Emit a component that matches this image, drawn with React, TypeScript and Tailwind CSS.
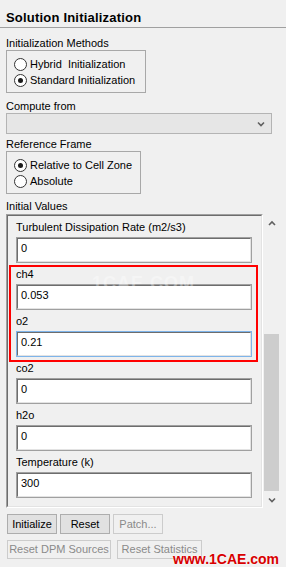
import type { ReactNode } from "react"

// classic windows-style radio
function Radio({ checked, label }: { checked?: boolean; label: string }) {
    return (
        <div className="flex items-center h-[16px] leading-[16px]">
            <span className="w-[13px] h-[13px] rounded-full border border-[#333333] bg-white flex items-center justify-center">
                {checked && <span className="w-[5px] h-[5px] rounded-full bg-[#1a1a1a]" />}
            </span>
            <span className="ml-[3px] whitespace-pre">{label}</span>
        </div>
    )
}

function GroupLabel({ children, mt }: { children: ReactNode; mt: string }) {
    return <div className={`${mt} px-[6px] leading-[13px] h-[13px]`}>{children}</div>
}

function Field({ label, value, focused }: { label: string; value: string; focused?: boolean }) {
    return (
        <div className="h-[47px] pl-[8px]">
            <div className="h-[21px] pt-[5px] leading-[13px]">{label}</div>
            <div
                className={`w-[236px] h-[26px] border ${focused ? "border-[#7eb4ea]" : "border-[#a0a0a0]"}`}
            >
                <div className="h-full bg-white border-t border-l border-[#6d6d6d] border-r-[#e3e3e3] border-b-[#e3e3e3] border-r border-b pl-[3px] pt-[1px] leading-[16px]">
                    {value}
                </div>
            </div>
        </div>
    )
}

function Btn({ children, w, disabled, h }: { children: ReactNode; w: string; disabled?: boolean; h: string }) {
    return (
        <div
            className={`${w} ${h} flex items-center justify-center border ${
                disabled
                    ? "border-[#cccccc] bg-[#f0f0f0] text-[#8a8a8a]"
                    : "border-[#adadad] bg-[#e1e1e1] text-black"
            }`}
        >
            {children}
        </div>
    )
}

function Chevron({ up, className }: { up?: boolean; className?: string }) {
    return (
        <svg width="8" height="6" viewBox="0 0 8 6" className={className}>
            <polyline
                points={up ? "1,5 4,2 7,5" : "1,1.5 4,4.5 7,1.5"}
                fill="none"
                stroke="#606060"
                strokeWidth="1.6"
            />
        </svg>
    )
}

export default function App() {
    return (
        <div
            className="relative w-[286px] h-[567px] overflow-hidden bg-[#f0f0f0] text-black text-[11px]"
            style={{ fontFamily: '"Liberation Sans", Arial, sans-serif' }}
        >
            {/* Title */}
            <div className="h-[28px] border-b border-[#a0a0a0] pt-[10px] px-[6px]">
                <div className="text-[13px] font-bold leading-[16px] tracking-[0.2px]">Solution Initialization</div>
            </div>

            {/* Initialization Methods */}
            <GroupLabel mt="mt-[9px]">Initialization Methods</GroupLabel>
            <div className="ml-[6px] w-[140px] h-[43px] border border-[#a8a8a8] pt-[5px] pl-[7px]">
                <Radio label="Hybrid  Initialization" />
                <Radio checked label="Standard Initialization" />
            </div>

            {/* Compute from */}
            <GroupLabel mt="mt-[7px]">Compute from</GroupLabel>
            <div className="ml-[6px] w-[266px] h-[21px] border border-[#b4b4b4] bg-[#e6e6e6] flex items-center justify-end pr-[6px]">
                <Chevron />
            </div>

            {/* Reference Frame */}
            <GroupLabel mt="mt-[4px]">Reference Frame</GroupLabel>
            <div className="ml-[6px] w-[135px] h-[43px] border border-[#a8a8a8] pt-[5px] pl-[7px]">
                <Radio checked label="Relative to Cell Zone" />
                <Radio label="Absolute" />
            </div>

            {/* Initial Values */}
            <GroupLabel mt="mt-[6px]">Initial Values</GroupLabel>
            <div className="mt-[1px] ml-[6px] flex">
                <div className="w-[257px] h-[294px] border border-[#a0a0a0] border-r-white border-b-white">
                    <div className="h-full border border-[#6d6d6d] border-r-[#e3e3e3] border-b-[#e3e3e3]">
                        <Field label="Turbulent Dissipation Rate (m2/s3)" value="0" />
                        <div className="relative">
                            <Field label="ch4" value="0.053" />
                            <Field label="o2" value="0.21" focused />
                            <div className="absolute top-[2px] left-[1px] w-[249px] h-[97px] border-2 border-[#ff0000]" />
                        </div>
                        <Field label="co2" value="0" />
                        <Field label="h2o" value="0" />
                        <Field label="Temperature (k)" value="300" />
                    </div>
                </div>
                {/* scrollbar */}
                <div className="w-[17px] h-[294px] flex flex-col">
                    <div className="h-[17px] flex items-center justify-center pl-[1px]">
                        <Chevron up />
                    </div>
                    <div className="flex-1 flex flex-col justify-end px-[1px]">
                        <div className="h-[157px] bg-[#cdcdcd]" />
                    </div>
                    <div className="h-[17px] flex items-center justify-center pl-[1px]">
                        <Chevron />
                    </div>
                </div>
            </div>

            {/* Buttons */}
            <div className="mt-[6px] ml-[7px] flex gap-[3px]">
                <Btn w="w-[50px]" h="h-[20px]">Initialize</Btn>
                <Btn w="w-[50px]" h="h-[20px]">Reset</Btn>
                <Btn w="w-[50px]" h="h-[20px]" disabled>Patch...</Btn>
            </div>
            <div className="mt-[6px] ml-[7px] flex gap-[6px]">
                <Btn w="w-[104px]" h="h-[19px]" disabled>Reset DPM Sources</Btn>
                <Btn w="w-[85px]" h="h-[19px]" disabled>Reset Statistics</Btn>
            </div>

            {/* watermarks */}
            <div className="absolute left-[92px] top-[270px] text-[18px] font-bold text-white opacity-35 tracking-[1px]">
                1CAE.COM
            </div>
            <div className="absolute left-[173px] top-[551px] text-[14px] font-bold leading-[16px] text-[#d80000] [text-shadow:0_0_2px_#ffffff]">
                www.1CAE.com
            </div>
        </div>
    )
}
